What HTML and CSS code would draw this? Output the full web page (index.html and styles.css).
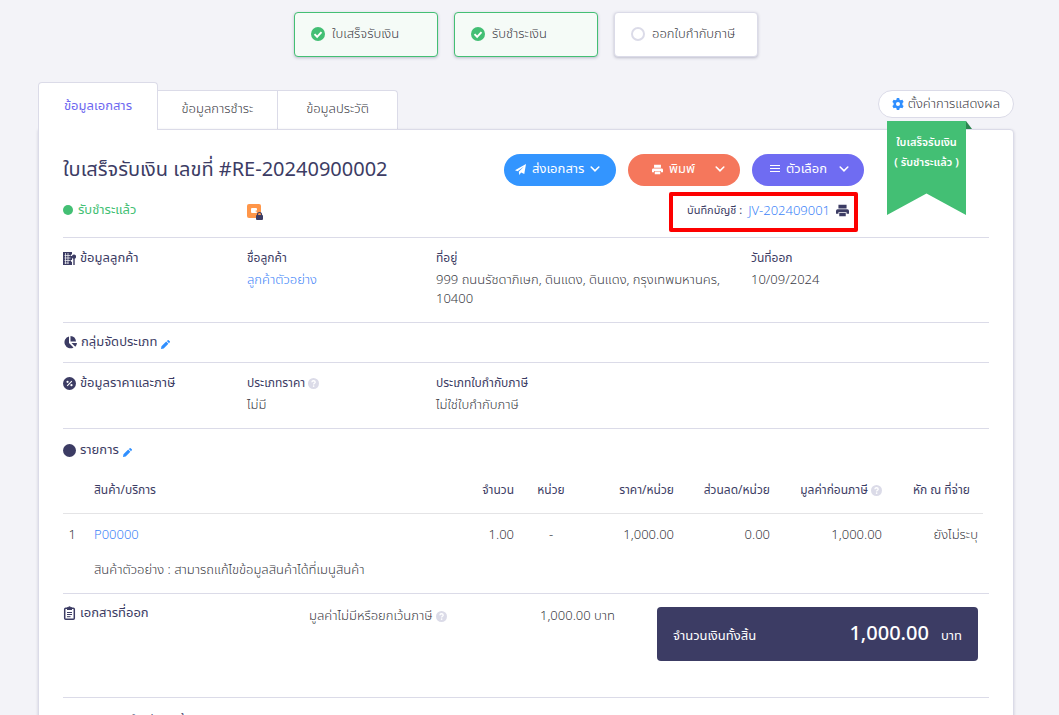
FILE: index.html
```html
<!DOCTYPE html>
<html lang="th">
<head>
    <meta charset="UTF-8">
    <meta name="viewport" content="width=device-width, initial-scale=1.0">
    <title>ใบเสร็จรับเงิน #RE-20240900002</title>
    <link rel="stylesheet" href="styles.css">
</head>
<body>

<!-- shared icons -->
<svg class="icon-defs" width="0" height="0" aria-hidden="true">
    <symbol id="icon-check" viewBox="0 0 16 16">
        <circle cx="8" cy="8" r="8" fill="#43bf74"/>
        <path d="M4 8.2l3 3 5-5.4" fill="none" stroke="#fff" stroke-width="2.2"/>
    </symbol>
    <symbol id="icon-chevron" viewBox="0 0 10 10">
        <path d="M1.2 3l3.8 3.8L8.800 3" fill="none" stroke="currentColor" stroke-width="1.600" stroke-linecap="round"/>
    </symbol>
    <symbol id="icon-print" viewBox="0 0 16 16">
        <path d="M3 1h10v4.500H3zM2 6.500h12a2 2 0 0 1 2 2V12h-3v-2H3v2H0V8.500a2 2 0 0 1 2-2zM4 11h8v4H4z" fill="currentColor"/>
    </symbol>
    <symbol id="icon-help" viewBox="0 0 16 16">
        <circle cx="8" cy="8" r="8" fill="#dbdbe8"/>
        <path d="M5.600 6.200C5.700 4.700 6.700 4 8 4s2.500.8 2.500 2.100C10.500 7.700 8.200 7.700 8.200 9.400" fill="none" stroke="#fff" stroke-width="1.900"/>
        <circle cx="8.200" cy="11.900" r="1.200" fill="#fff"/>
    </symbol>
    <symbol id="icon-pencil" viewBox="0 0 10 10">
        <path d="M0 10l.5-3L5.800 1.800l2.400 2.400L3 9.500zM6.500 1.100L7.500.2q.5-.4 1 0L9.800 1.500q.4.500 0 1L8.900 3.500z" fill="#2f8fff"/>
    </symbol>
</svg>

<div class="page">
    <div class="steps">
        <div class="step done"><svg class="step-icon"><use href="#icon-check"/></svg>ใบเสร็จรับเงิน</div>
        <div class="step done"><svg class="step-icon"><use href="#icon-check"/></svg>รับชำระเงิน</div>
        <div class="step"><span class="step-icon empty"></span>ออกใบกำกับภาษี</div>
    </div>

    <div class="top-bar">
        <nav class="tabs">
            <a href="#document" class="tab active">ข้อมูลเอกสาร</a>
            <a href="#payment" class="tab">ข้อมูลการชำระ</a>
            <a href="#history" class="tab">ข้อมูลประวัติ</a>
        </nav>
        <button class="settings">
            <svg width="12" height="12" viewBox="0 0 16 16">
                <path fill="#2f8fff" fill-rule="evenodd" d="M6.400 0h3.200l.5 2.200 1.600.9 2.200-.7 1.600 2.800L13.900 6.800v2.400l1.600 1.600-1.600 2.800-2.200-.7-1.600.9-.5 2.200H6.400l-.5-2.200-1.600-.9-2.200.7L.5 10.800l1.600-1.600V6.800L.5 5.200l1.600-2.800 2.200.7 1.600-.9zM8 5.300a2.700 2.700 0 1 0 0 5.400 2.700 2.700 0 0 0 0-5.400z"/>
            </svg>
            ตั้งค่าการแสดงผล
        </button>
    </div>

    <main class="card">
        <div class="ribbon">
            <div class="ribbon-body">ใบเสร็จรับเงิน<br>( รับชำระแล้ว )</div>
        </div>

        <header class="doc-header">
            <h1>ใบเสร็จรับเงิน เลขที่ #RE-20240900002</h1>
            <div class="actions">
                <button class="action blue">
                    <svg width="11" height="11" viewBox="0 0 16 16"><path d="M16 0L13.500 14.500 8.800 12.500 6.300 16 5.500 11.300 13 3.500 3.800 10.500 0 9z" fill="#fff"/></svg>
                    ส่งเอกสาร
                    <svg width="10" height="10"><use href="#icon-chevron"/></svg>
                </button>
                <button class="action orange">
                    <svg width="11" height="11"><use href="#icon-print"/></svg>
                    พิมพ์
                    <svg class="push" width="10" height="10"><use href="#icon-chevron"/></svg>
                </button>
                <button class="action purple">
                    <svg width="10" height="10" viewBox="0 0 10 10"><path d="M0 1.500h10M0 4.500h10M0 7.500h10" stroke="#fff"/></svg>
                    ตัวเลือก
                    <svg class="push" width="10" height="10"><use href="#icon-chevron"/></svg>
                </button>
            </div>
        </header>

        <div class="doc-status">
            <div class="status"><span class="dot"></span>รับชำระแล้ว</div>
            <svg class="lock-icon" width="17" height="17" viewBox="0 0 17 17">
                <rect width="14" height="14" rx="2" fill="#ff9649"/>
                <rect x="4" y="4" width="6" height="5" rx="1" fill="#fff"/>
                <path d="M8.500 7.500L9 6l2 2z" fill="#ff9649"/>
                <path d="M10.500 12v-1.500a2 2 0 0 1 4 0V12" fill="none" stroke="#3c3c64" stroke-width="1.200"/>
                <rect x="9" y="11" width="7" height="5" rx="1" fill="#3c3c64"/>
            </svg>
            <div class="journal">
                <span class="journal-label">บันทึกบัญชี :</span>
                <a href="#journal">JV-202409001</a>
                <svg width="13" height="13"><use href="#icon-print"/></svg>
            </div>
        </div>

        <section class="row">
            <h2>
                <svg width="13" height="13" viewBox="0 0 13 13">
                    <path d="M0 0h9v2.500H8V4h1v4H8v2h1v3H0z" fill="#3c3c64"/>
                    <path d="M1.500 3.500h6M1.500 6h6M1.500 8.500h6M1.500 11h4M2.500 1v11M5 1v11" stroke="#fff" stroke-width=".7"/>
                    <path d="M11 2.500a2 2 0 0 1 2 2.500c0 1-.8 1.500-1.300 1.800V13h-1.400V6.800C9.500 6.500 9 6 9 5a2 2 0 0 1 2-2.500zM6.500 9.500h2v3.500h-2z" fill="#3c3c64"/>
                </svg>
                ข้อมูลลูกค้า
            </h2>
            <div>
                <h3>ชื่อลูกค้า</h3>
                <a href="#customer">ลูกค้าตัวอย่าง</a>
            </div>
            <div>
                <h3>ที่อยู่</h3>
                <p class="address">999 ถนนรัชดาภิเษก, ดินแดง, ดินแดง, กรุงเทพมหานคร, 10400</p>
            </div>
            <div>
                <h3>วันที่ออก</h3>
                <p>10/09/2024</p>
            </div>
        </section>

        <section class="row short">
            <h2>
                <svg width="14" height="13" viewBox="0 0 14 13">
                    <path d="M6 .5V7l4.500 4.500A6 6 0 1 1 6 .5z" fill="#3c3c64"/>
                    <path d="M7.500 0A6 6 0 0 1 13 5.500H7.500zM8.500 7H14a6 6 0 0 1-1.700 3.700z" fill="#3c3c64"/>
                </svg>
                กลุ่มจัดประเภท
                <svg class="pencil"><use href="#icon-pencil"/></svg>
            </h2>
        </section>

        <section class="row">
            <h2>
                <svg width="13" height="13" viewBox="0 0 14 14">
                    <circle cx="7" cy="7" r="7" fill="#3c3c64"/>
                    <path d="M4.500 9.500l5-5" stroke="#fff" stroke-width="1.200"/>
                    <circle cx="4.900" cy="5.200" r="1.200" fill="#fff"/>
                    <circle cx="9.100" cy="8.800" r="1.200" fill="#fff"/>
                </svg>
                ข้อมูลราคาและภาษี
            </h2>
            <div>
                <h3>ประเภทราคา <svg class="help"><use href="#icon-help"/></svg></h3>
                <p>ไม่มี</p>
            </div>
            <div>
                <h3>ประเภทใบกำกับภาษี</h3>
                <p>ไม่ใช่ใบกำกับภาษี</p>
            </div>
        </section>

        <section class="items">
            <h2>
                <svg width="13" height="13" viewBox="0 0 14 14"><circle cx="7" cy="7" r="7" fill="#3c3c64"/></svg>
                รายการ
                <svg class="pencil"><use href="#icon-pencil"/></svg>
            </h2>
            <table>
                <colgroup>
                    <col class="col-no"><col><col class="col-qty"><col class="col-unit">
                    <col class="col-price"><col class="col-discount"><col class="col-value"><col class="col-tax">
                </colgroup>
                <thead>
                    <tr>
                        <th></th>
                        <th>สินค้า/บริการ</th>
                        <th class="num">จำนวน</th>
                        <th class="mid">หน่วย</th>
                        <th class="num">ราคา/หน่วย</th>
                        <th class="num">ส่วนลด/หน่วย</th>
                        <th class="num">มูลค่าก่อนภาษี <svg class="help"><use href="#icon-help"/></svg></th>
                        <th class="tax">หัก ณ ที่จ่าย</th>
                    </tr>
                </thead>
                <tbody>
                    <tr>
                        <td class="num">1</td>
                        <td><a href="#product">P00000</a></td>
                        <td class="num">1.00</td>
                        <td class="mid">-</td>
                        <td class="num">1,000.00</td>
                        <td class="num">0.00</td>
                        <td class="num">1,000.00</td>
                        <td class="tax">ยังไม่ระบุ</td>
                    </tr>
                    <tr class="note">
                        <td></td>
                        <td colspan="7">สินค้าตัวอย่าง : สามารถแก้ไขข้อมูลสินค้าได้ที่เมนูสินค้า</td>
                    </tr>
                </tbody>
            </table>
        </section>

        <section class="totals">
            <h2>
                <svg width="13" height="14" viewBox="0 0 13 14">
                    <rect x="1.700" y="2.200" width="9.600" height="11" rx="1" fill="none" stroke="#3c3c64" stroke-width="1.500"/>
                    <path d="M4 1.200h1.200a1.400 1.400 0 0 1 2.600 0H9V4H4z" fill="#3c3c64"/>
                    <path d="M4 6.500h5M4 8.500h5M4 10.700h3.500" stroke="#3c3c64"/>
                </svg>
                เอกสารที่ออก
            </h2>
            <p>มูลค่าไม่มีหรือยกเว้นภาษี <svg class="help"><use href="#icon-help"/></svg></p>
            <p class="amount">1,000.00 บาท</p>
            <div class="grand-total">
                <span>จำนวนเงินทั้งสิ้น</span>
                <strong>1,000.00</strong>
                <span>บาท</span>
            </div>
        </section>

        <section class="remark">
            <h2>
                <svg width="13" height="13" viewBox="0 0 13 13"><path d="M1 3h11v8H5l-3 2v-2H1z" fill="#3c3c64"/></svg>
                หมายเหตุสำหรับลูกค้า
            </h2>
        </section>
    </main>
</div>

</body>
</html>
```
FILE: styles.css
```css
* {
    box-sizing: border-box;
}
html {
    background-color: #f3f3f8;
}
body {
    margin: 0;
    font-family: "Noto Sans Thai", "Noto Sans", sans-serif;
    font-size: 13px;
    font-weight: 300;
    line-height: 20px;
    color: #3a3a44;
}
h1, h2, h3, p {
    margin: 0;
    font-weight: 400;
    color: #3c3c64;
}
a {
    color: #4084f8;
    text-decoration: none;
}
button {
    font: inherit;
    cursor: pointer;
}
.icon-defs {
    position: absolute;
}
.page {
    padding: 12px 45px 0 38px;
}

/* steps */
.steps {
    display: flex;
    justify-content: center;
    gap: 16px;
}
.step {
    display: flex;
    align-items: center;
    gap: 7px;
    width: 144px;
    height: 45px;
    padding: 0 16px 2px;
    border: 1px solid #dbdbe8;
    border-radius: 4px;
    background-color: #fff;
    box-shadow: 0 1px 3px rgba(60, 60, 100, 0.3);
}
.step.done {
    border-color: #43bf74;
    background-color: #f5fbf7;
}
.step-icon {
    width: 14px;
    height: 14px;
}
.step-icon.empty {
    border: 2px solid #dbdbe8;
    border-radius: 50%;
}

/* tabs */
.top-bar {
    display: flex;
    justify-content: space-between;
    align-items: flex-end;
    margin-top: 25px;
}
.tabs {
    display: flex;
    align-items: flex-end;
}
.tab {
    width: 120px;
    height: 39px;
    padding-top: 8px;
    border: 1px solid #dbdbe8;
    border-width: 1px 1px 0 0;
    background-color: #fff;
    color: #3a3a44;
    text-align: center;
}
.tab:last-child {
    border-top-right-radius: 4px;
}
.tab.active {
    position: relative;
    z-index: 1;
    height: 48px;
    padding-top: 13px;
    margin-bottom: -1px;
    border-left-width: 1px;
    border-radius: 4px 4px 0 0;
    color: #6d67f0;
    font-weight: 400;
}
.settings {
    display: flex;
    align-items: center;
    gap: 4px;
    height: 28px;
    margin-bottom: 11px;
    padding: 0 13px;
    border: 1px solid #dbdbe8;
    border-radius: 14px;
    background-color: #fff;
    color: #3a3a44;
}

/* card */
.card {
    position: relative;
    padding: 24px 24px 40px;
    border: 1px solid #dbdbe8;
    border-radius: 0 4px 0 0;
    background-color: #fff;
    box-shadow: 0 1px 3px rgba(60, 60, 100, 0.2);
}
.ribbon {
    position: absolute;
    top: -9px;
    right: 47px;
    width: 79px;
}
.ribbon::after {
    content: "";
    position: absolute;
    top: 0;
    left: 100%;
    width: 6px;
    height: 8px;
    background-color: #2c8450;
    clip-path: polygon(0 0, 100% 100%, 0 100%);
}
.ribbon-body {
    height: 94px;
    padding-top: 12px;
    background-color: #43bf74;
    clip-path: polygon(0 0, 100% 0, 100% 100%, 50% 77%, 0 100%);
    color: #fff;
    font-size: 11px;
    font-weight: 600;
    text-align: center;
}
.doc-header {
    display: flex;
    justify-content: space-between;
    align-items: center;
    padding-right: 125px;
}
h1 {
    font-size: 20px;
    line-height: 32px;
}
.actions {
    display: flex;
    gap: 12px;
}
.action {
    display: flex;
    align-items: center;
    gap: 6px;
    width: 112px;
    height: 32px;
    padding: 0 15px 2px 11px;
    border: none;
    border-radius: 16px;
    color: #fff;
    font-weight: 400;
}
.action.blue {
    background-color: #3395ff;
}
.action.orange {
    padding-left: 24px;
    background-color: #f5775c;
}
.action.purple {
    padding-left: 18px;
    background-color: #6f6cf2;
}
.action .push {
    margin-left: auto;
}
.doc-status {
    display: flex;
    align-items: center;
    height: 40px;
    margin: 6px 131px 5px 0;
}
.status {
    display: flex;
    align-items: center;
    gap: 5px;
    width: 184px;
    padding-bottom: 4px;
    color: #43bf74;
    font-weight: 400;
}
.dot {
    width: 10px;
    height: 10px;
    border-radius: 50%;
    background-color: #43bf74;
}
.journal {
    display: flex;
    align-items: center;
    gap: 6px;
    width: 189px;
    height: 40px;
    margin-left: auto;
    padding: 0 0 3px 14px;
    border: 4px solid #fd0000;
    border-radius: 2px;
    color: #3c3c64;
}
.journal-label {
    font-size: 11px;
    font-weight: 400;
}

/* sections */
section {
    border-top: 1px solid #dbdbe8;
}
section p {
    color: #3a3a44;
    font-weight: 300;
}
h2 {
    display: flex;
    align-items: center;
    gap: 4px;
    font-size: 13px;
    line-height: 20px;
}
h3 {
    margin-bottom: 3px;
    font-size: 12px;
    line-height: 20px;
}
.pencil {
    width: 9px;
    height: 9px;
    margin-top: 4px;
}
.help {
    width: 11px;
    height: 11px;
    vertical-align: -2px;
}
.row {
    display: grid;
    grid-template-columns: 184fr 189fr 315fr 238fr;
    align-items: start;
    padding: 10px 0 13px;
}
.row.short {
    padding: 9px 0 10px;
}
.row a, .row p {
    display: block;
    line-height: 19px;
}
.address {
    padding-right: 20px;
}

/* items */
.items {
    padding-top: 11px;
}
table {
    width: calc(100% - 6px);
    border-collapse: collapse;
    table-layout: fixed;
}
th, td {
    padding: 11px 8px 0;
    text-align: left;
    font-weight: 300;
    white-space: nowrap;
}
th {
    padding-top: 20px;
    padding-bottom: 13px;
    border-bottom: 1px solid #e4e4e6;
    color: #3c3c64;
    font-size: 12px;
    font-weight: 400;
}
.num {
    text-align: right;
}
.mid {
    text-align: center;
}
.tax {
    padding-right: 5px;
    text-align: right;
}
th.tax {
    padding-right: 13px;
}
.note td {
    padding-top: 15px;
    padding-bottom: 13px;
}
.col-no {
    width: 23px;
}
.col-qty {
    width: 72px;
}
.col-unit {
    width: 58px;
}
.col-price {
    width: 102px;
}
.col-discount {
    width: 96px;
}
.col-value {
    width: 112px;
}
.col-tax {
    width: 93px;
}
td:first-child {
    padding-left: 0;
    padding-right: 10px;
}

/* totals */
.totals {
    display: grid;
    grid-template-columns: 246fr 168fr 138fr 42fr 321fr 11fr;
    align-items: start;
    padding: 9px 0 36px;
}
.totals p {
    margin-top: 3px;
}
.amount {
    text-align: right;
}
.grand-total {
    display: flex;
    align-items: baseline;
    grid-column: 5;
    gap: 12px;
    height: 54px;
    margin-top: 4px;
    padding: 17px 16px 0;
    border-radius: 4px;
    background-color: #3c3c64;
    color: #fff;
    font-weight: 400;
}
.grand-total strong {
    margin-left: auto;
    font-size: 20px;
    font-weight: 500;
}
.remark {
    padding-top: 12px;
}
```
